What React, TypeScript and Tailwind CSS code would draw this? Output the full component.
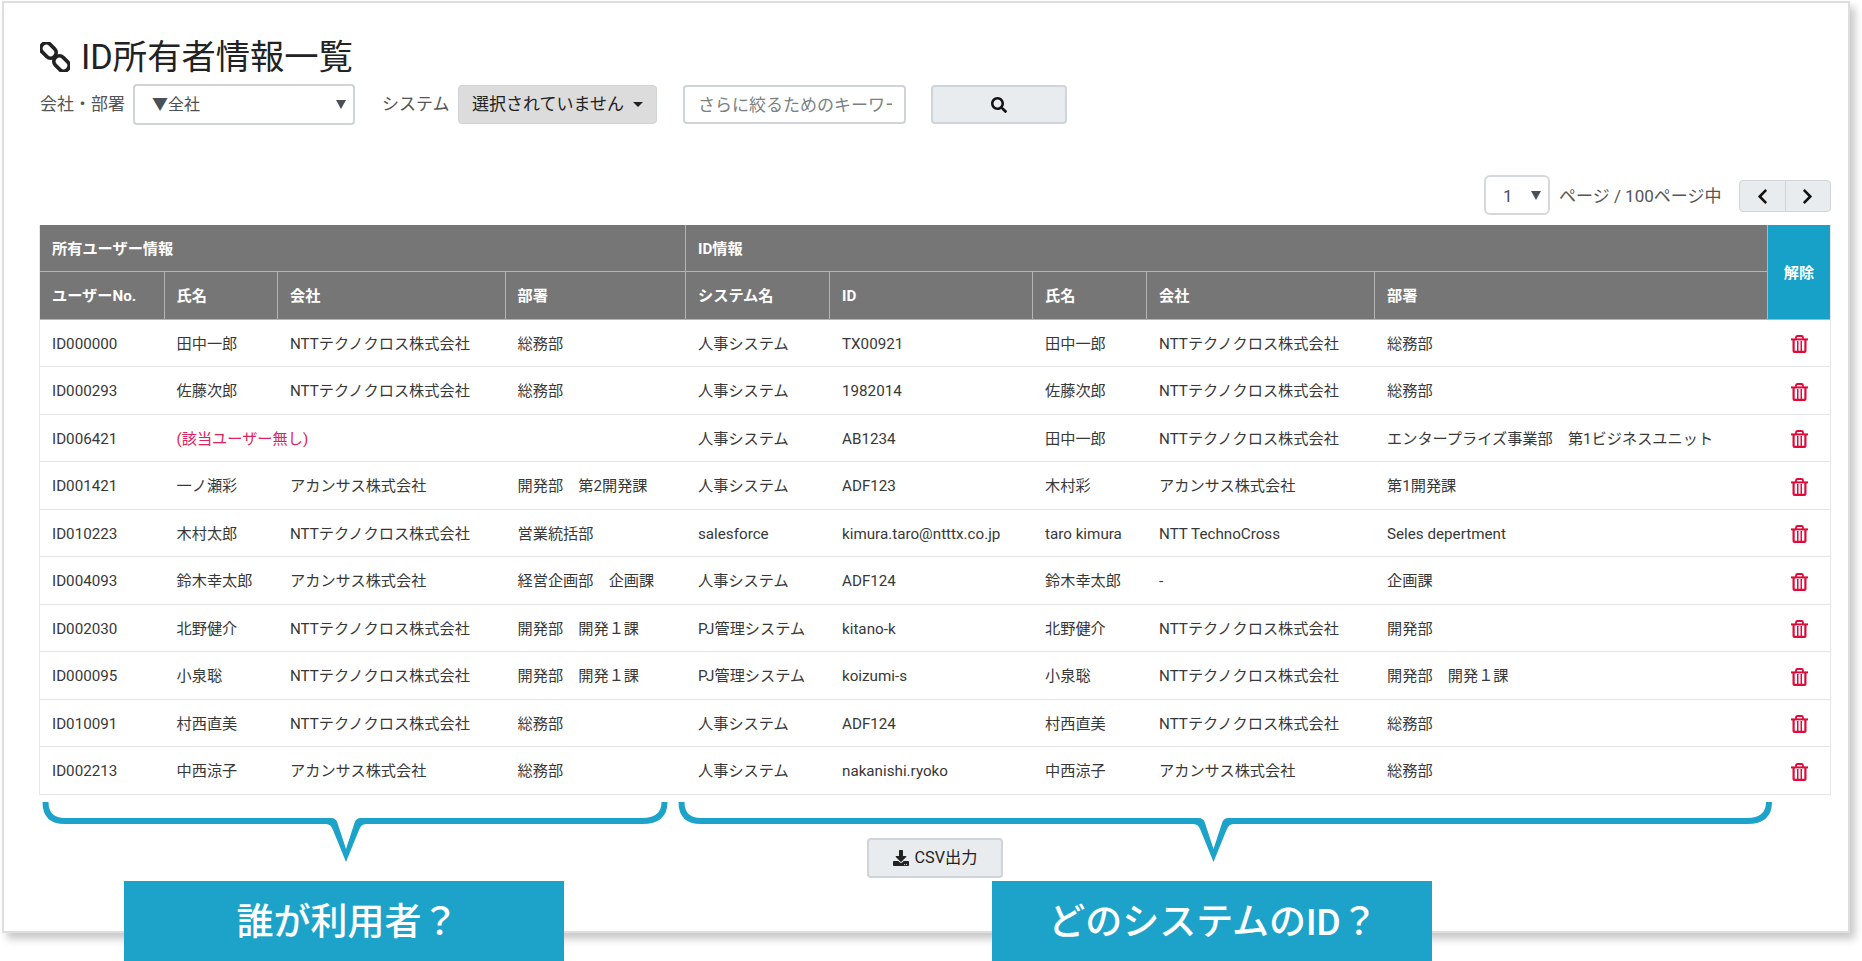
import { FaSearch, FaChevronLeft, FaChevronRight, FaDownload } from "react-icons/fa";

const FONT = "font-['Roboto','Noto_Sans_CJK_JP',sans-serif]";

type Row = [string, string, string, string, string, string, string, string, string];

const rows: Row[] = [
  ["ID000000", "田中一郎", "NTTテクノクロス株式会社", "総務部", "人事システム", "TX00921", "田中一郎", "NTTテクノクロス株式会社", "総務部"],
  ["ID000293", "佐藤次郎", "NTTテクノクロス株式会社", "総務部", "人事システム", "1982014", "佐藤次郎", "NTTテクノクロス株式会社", "総務部"],
  ["ID006421", "(該当ユーザー無し)", "", "", "人事システム", "AB1234", "田中一郎", "NTTテクノクロス株式会社", "エンタープライズ事業部　第1ビジネスユニット"],
  ["ID001421", "一ノ瀬彩", "アカンサス株式会社", "開発部　第2開発課", "人事システム", "ADF123", "木村彩", "アカンサス株式会社", "第1開発課"],
  ["ID010223", "木村太郎", "NTTテクノクロス株式会社", "営業統括部", "salesforce", "kimura.taro@ntttx.co.jp", "taro kimura", "NTT TechnoCross", "Seles depertment"],
  ["ID004093", "鈴木幸太郎", "アカンサス株式会社", "経営企画部　企画課", "人事システム", "ADF124", "鈴木幸太郎", "-", "企画課"],
  ["ID002030", "北野健介", "NTTテクノクロス株式会社", "開発部　開発１課", "PJ管理システム", "kitano-k", "北野健介", "NTTテクノクロス株式会社", "開発部"],
  ["ID000095", "小泉聡", "NTTテクノクロス株式会社", "開発部　開発１課", "PJ管理システム", "koizumi-s", "小泉聡", "NTTテクノクロス株式会社", "開発部　開発１課"],
  ["ID010091", "村西直美", "NTTテクノクロス株式会社", "総務部", "人事システム", "ADF124", "村西直美", "NTTテクノクロス株式会社", "総務部"],
  ["ID002213", "中西涼子", "アカンサス株式会社", "総務部", "人事システム", "nakanishi.ryoko", "中西涼子", "アカンサス株式会社", "総務部"],
];

const th = "border-r border-b border-[#b4b4b4] bg-[#767676] px-3 pt-[3px] text-left align-middle font-bold text-white";
const td = "border-b border-[#e6e6e6] px-3 pt-[3px] align-middle whitespace-nowrap";

function SelectArrow() {
  return <span className="h-0 w-0 border-x-[5px] border-t-[9px] border-x-transparent border-t-[#495057]" />;
}

function LinkIcon() {
  return (
    <svg width="30" height="30" viewBox="0 0 30 30" fill="none" stroke="#222" strokeWidth="3.8">
      <rect x="0" y="3" width="17" height="11" rx="5.5" transform="rotate(45 8.500 8.500)" />
      <rect x="13" y="16" width="17" height="11" rx="5.5" transform="rotate(45 21.500 21.500)" />
    </svg>
  );
}

function TrashIcon() {
  return (
    <svg className="mx-auto" width="17" height="18" viewBox="0 0 17 18" fill="#e00a3a">
      <path d="M5 4 V2.400 Q5 1 6.500 1 H10.500 Q12 1 12 2.400 V4" fill="none" stroke="#e00a3a" strokeWidth="1.8" />
      <rect x="0" y="3.400" width="17" height="2" />
      <path d="M1.500 4 H15.500 V16 Q15.500 18 13.500 18 H3.500 Q1.500 18 1.500 16 Z M3.700 5 V15.800 H13.300 V5 Z" fillRule="evenodd" />
      <rect x="6" y="6" width="1.500" height="10" />
      <rect x="9.500" y="6" width="1.500" height="10" />
    </svg>
  );
}

export default function App() {
  return (
    <div className={`relative h-[961px] w-[1862px] overflow-hidden bg-white text-[15.2px] text-[#383838] ${FONT}`}>
      <div className="ml-[2px] mt-[1px] h-[932px] w-[1848px] border-2 border-[#dedede] bg-white pl-[35px] pr-[17px] pt-[33px] shadow-[5px_6px_8px_rgba(0,0,0,0.22)]">
        <h1 className="ml-[1px] flex h-[42px] items-center gap-[11px] text-[34.3px] font-normal leading-none text-[#222]">
          <LinkIcon />
          <span>ID所有者情報一覧</span>
        </h1>

        <div className="ml-[1px] mt-[6px] flex h-[41px] items-center text-[17px] text-[#555]">
          <span className="w-[93px] whitespace-nowrap">会社・部署</span>
          <div className="flex h-[41px] w-[222px] items-center justify-between rounded border-2 border-[#ced4da] pl-[17px] pr-[7px] text-[16px] text-[#495057]">
            <span>▼全社</span>
            <SelectArrow />
          </div>
          <span className="ml-[27px] w-[76px] whitespace-nowrap">システム</span>
          <div className="flex h-[39px] w-[199px] items-center justify-center gap-[9px] rounded border border-[#ced4da] bg-[#dcdcdc] text-[#222]">
            <span className="whitespace-nowrap">選択されていません</span>
            <span className="h-0 w-0 border-x-[5px] border-t-[5px] border-x-transparent border-t-[#222]" />
          </div>
          <input
            readOnly
            placeholder="さらに絞るためのキーワード"
            className="ml-[26px] h-[39px] w-[223px] rounded border-2 border-[#ced4da] pl-[13px] pr-[12px] outline-none placeholder:text-[#7a7f85]"
          />
          <div className="ml-[25px] flex h-[39px] w-[136px] items-center justify-center rounded border-2 border-[#ced4da] bg-[#e9ecef] text-[#111]">
            <FaSearch className="h-[16px] w-[16px]" />
          </div>
        </div>

        <div className="mt-[50px] flex h-[40px] items-center justify-end text-[17px] text-[#555]">
          <div className="flex h-[40px] w-[66px] items-center justify-between rounded-md border-2 border-[#d5d9de] pl-[17px] pr-[7px] text-[#495057]">
            <span className="pt-[3px]">1</span>
            <SelectArrow />
          </div>
          <span className="ml-[9px] w-[163px] whitespace-nowrap pt-[3px]">ページ / 100ページ中</span>
          <div className="ml-[17px] mt-[2px] flex h-[32px] w-[92px] rounded border border-[#ced4da] bg-[#e9ecef] text-[#111]">
            <div className="flex flex-1 items-center justify-center border-r border-[#ced4da]">
              <FaChevronLeft className="h-[17px] w-[17px]" />
            </div>
            <div className="flex flex-1 items-center justify-center">
              <FaChevronRight className="h-[17px] w-[17px]" />
            </div>
          </div>
        </div>

        <table className="mt-[9.5px] w-[1792px] table-fixed border-separate border-spacing-0 border-l border-r border-[#e6e6e6]">
          <colgroup>
            <col className="w-[124.5px]" />
            <col className="w-[113.5px]" />
            <col className="w-[227.5px]" />
            <col className="w-[180.5px]" />
            <col className="w-[144px]" />
            <col className="w-[203px]" />
            <col className="w-[114px]" />
            <col className="w-[228px]" />
            <col className="w-[393px]" />
            <col className="w-[62px]" />
          </colgroup>
          <thead>
            <tr className="h-[47.5px]">
              <th colSpan={4} className={th}>所有ユーザー情報</th>
              <th colSpan={5} className={th}>ID情報</th>
              <th rowSpan={2} className="border-b border-[#b4b4b4] bg-[#17a0c8] pt-[3px] text-center font-bold text-white">解除</th>
            </tr>
            <tr className="h-[47.5px]">
              {["ユーザーNo.", "氏名", "会社", "部署", "システム名", "ID", "氏名", "会社", "部署"].map((label, i) => (
                <th key={i} className={th}>{label}</th>
              ))}
            </tr>
          </thead>
          <tbody>
            {rows.map((row) => (
              <tr key={row[0]} className="h-[47.5px]">
                {row.map((cell, i) =>
                  i === 1 && cell.startsWith("(") ? (
                    <td key={i} colSpan={3} className={`${td} text-[#e0215b]`}>{cell}</td>
                  ) : (i === 2 || i === 3) && row[1].startsWith("(") ? null : (
                    <td key={i} className={td}>{cell}</td>
                  ),
                )}
                <td className={`${td} text-center`}>
                  <TrashIcon />
                </td>
              </tr>
            ))}
          </tbody>
        </table>

        <div className="ml-[1px] mt-[6px] flex h-[70px] gap-[8px]">
          <svg width="630" height="70" viewBox="0 0 630 70" fill="#1da3ca">
            <path d="M2.500 1 Q2.500 23 25 23 H286 Q291 23 293 29 L306 61 L319 29 Q321 23 326 23 H602 Q627.500 23 627.500 1 H621.500 Q621.500 17 602 17 H321 Q316 17 314.500 22 L306 48 L297.500 22 Q296 17 291 17 H25 Q8.500 17 8.500 1 Z" />
          </svg>
          <svg width="1096" height="70" viewBox="0 0 1096 70" fill="#1da3ca">
            <path d="M0.500 1 Q0.500 23 23 23 H515.500 Q520.500 23 522.500 29 L535.500 61 L548.500 29 Q550.500 23 555.500 23 H1069 Q1094 23 1094 1 H1088 Q1088 17 1069 17 H550.500 Q545.500 17 544 22 L535.500 48 L527 22 Q525.500 17 520.500 17 H23 Q6.500 17 6.500 1 Z" />
          </svg>
        </div>
      </div>

      <div className="absolute left-[867px] top-[838px] flex h-[40px] w-[136px] items-center justify-center gap-[6px] rounded border-2 border-[#ced4da] bg-[#e9ecef] text-[16.2px] text-[#222]">
        <FaDownload className="h-[16px] w-[16px]" />
        <span>CSV出力</span>
      </div>
      <div className="absolute left-[124px] top-[881px] flex h-[80px] w-[440px] items-center justify-center bg-[#1da3ca] pl-[7px] pt-[4px] text-[37px] font-medium text-white">誰が利用者？</div>
      <div className="absolute left-[992px] top-[881px] flex h-[80px] w-[440px] items-center justify-center bg-[#1da3ca] pl-[2px] pt-[4px] text-[37px] font-medium text-white">どのシステムのID？</div>
    </div>
  );
}
